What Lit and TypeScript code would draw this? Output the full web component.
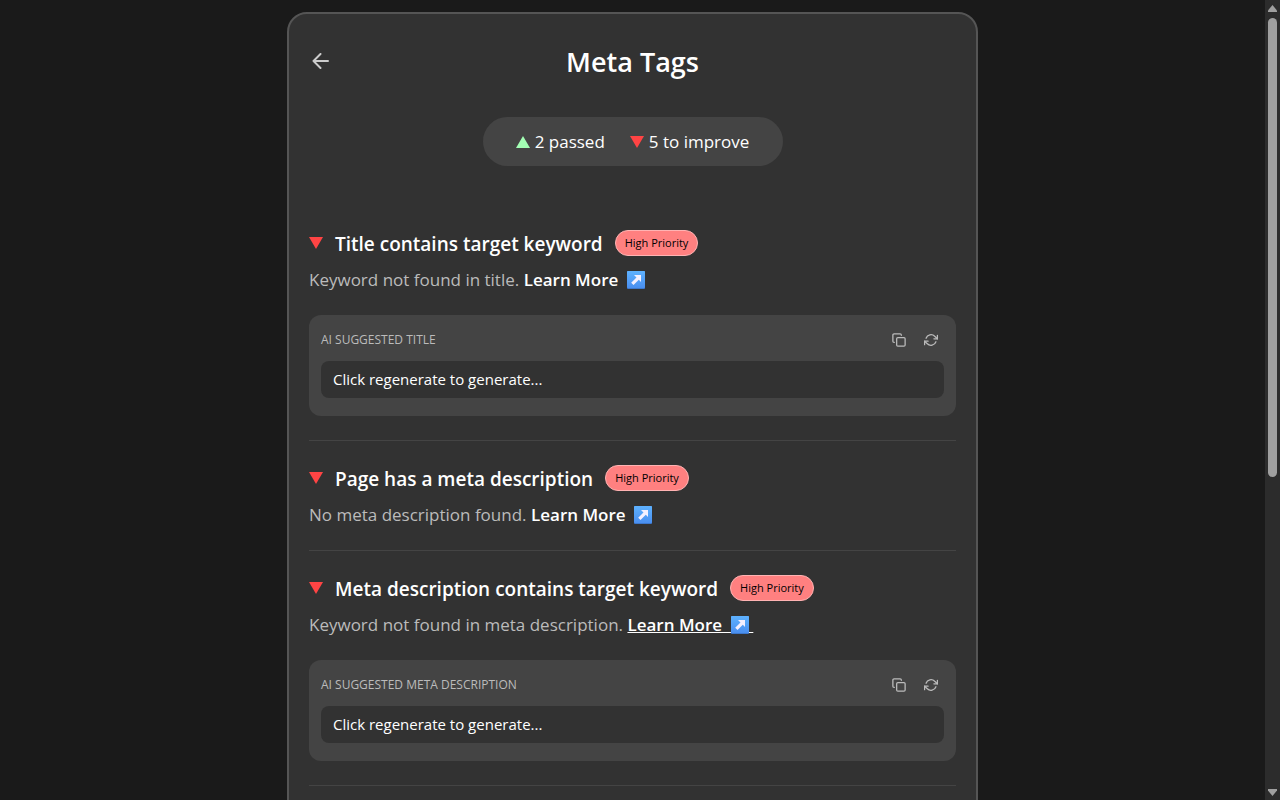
import { LitElement, html, css, nothing } from "lit";
import { customElement, property } from "lit/decorators.js";
import { classMap } from "lit/directives/class-map.js";

interface Check {
  title: string;
  detail: string;
  suggestion?: string;
  active?: boolean;
}

const CHECKS: Check[] = [
  {
    title: "Title contains target keyword",
    detail: "Keyword not found in title.",
    suggestion: "AI suggested title",
  },
  {
    title: "Page has a meta description",
    detail: "No meta description found.",
  },
  {
    title: "Meta description contains target keyword",
    detail: "Keyword not found in meta description.",
    suggestion: "AI suggested meta description",
    active: true,
  },
];

const downTriangle = html`<svg class="triangle" viewBox="0 0 14 12" width="14" height="12" aria-hidden="true">
  <path d="M0 0h14L7 12z" fill="#ff4444" />
</svg>`;

const upTriangle = html`<svg class="triangle" viewBox="0 0 14 12" width="14" height="12" aria-hidden="true">
  <path d="M0 12h14L7 0z" fill="#a3ffb4" />
</svg>`;

@customElement("suggestion-box")
export class SuggestionBox extends LitElement {
  @property() label = "";

  static styles = css`
    :host {
      display: block;
      margin: 23px 0 1px;
    }
    .box {
      background: #444;
      border-radius: 12px;
      padding: 12px 12px 18px;
    }
    .top {
      display: flex;
      align-items: center;
      justify-content: space-between;
      height: 26px;
      margin-bottom: 8px;
    }
    .label {
      font-size: 12px;
      line-height: 16px;
      color: #bbb;
      text-transform: uppercase;
    }
    .actions {
      display: flex;
      gap: 6px;
    }
    .action {
      display: flex;
      align-items: center;
      justify-content: center;
      width: 26px;
      height: 26px;
      padding: 0;
      border: 0;
      background: none;
      color: #bbb;
      cursor: pointer;
    }
    .value {
      background: #323232;
      border-radius: 8px;
      padding: 8px 12px;
      font-size: 15px;
      line-height: 21px;
      color: #fff;
    }
  `;

  render() {
    return html`
      <div class="box">
        <div class="top">
          <span class="label">${this.label}</span>
          <div class="actions">
            <button class="action" type="button" aria-label="Copy">
              <svg width="14" height="14" viewBox="0 0 24 24" fill="none" stroke="currentColor" stroke-width="2.2" stroke-linecap="round" stroke-linejoin="round">
                <rect x="8" y="8" width="14.500" height="14.500" rx="2" />
                <path d="M4 16H3.500a2 2 0 0 1-2-2V3.500a2 2 0 0 1 2-2H14a2 2 0 0 1 2 2V4" />
              </svg>
            </button>
            <button class="action" type="button" aria-label="Regenerate">
              <svg width="14" height="14" viewBox="0 0 24 24" fill="none" stroke="currentColor" stroke-width="2.2" stroke-linecap="round" stroke-linejoin="round">
                <path d="M23 4v6h-6M1 20v-6h6" />
                <path d="M3.510 9a9 9 0 0 1 14.850-3.360L23 10M1 14l4.640 4.360A9 9 0 0 0 20.490 15" />
              </svg>
            </button>
          </div>
        </div>
        <div class="value">Click regenerate to generate...</div>
      </div>
    `;
  }
}

@customElement("app-root")
export class AppRoot extends LitElement {
  static styles = css`
    :host {
      display: flex;
      height: 100vh;
      background: #1a1a1a;
      color: #fff;
      font-family: "Open Sans", "Noto Sans", sans-serif;
    }
    .page {
      flex: 1;
      min-width: 0;
      overflow-y: auto;
      scrollbar-width: none;
      padding: 12px;
      box-sizing: border-box;
    }
    .card {
      box-sizing: border-box;
      max-width: 691px;
      min-height: 160vh;
      margin: 0 auto;
      padding: 24px 20px;
      background: #323232;
      border: 2px solid #555;
      border-radius: 20px;
    }
    .header {
      display: grid;
      grid-template-columns: 24px 1fr 24px;
      align-items: center;
      height: 48px;
    }
    .back {
      display: flex;
      align-items: center;
      justify-content: center;
      width: 24px;
      height: 28px;
      padding: 0;
      border: 0;
      background: none;
      color: #ccc;
      cursor: pointer;
    }
    .heading {
      margin: 0;
      text-align: center;
      font-size: 27px;
      line-height: 36px;
      font-weight: 600;
    }
    .summary {
      display: flex;
      align-items: center;
      justify-content: center;
      gap: 25px;
      box-sizing: border-box;
      width: 300px;
      max-width: 100%;
      margin: 31px auto 40px;
      padding: 12px;
      border-radius: 25px;
      background: #444;
      font-size: 17px;
      line-height: 25px;
    }
    .count {
      display: flex;
      align-items: center;
      gap: 5px;
    }
    .triangle {
      flex: none;
      display: block;
    }
    .check {
      padding: 23px 0;
      border-bottom: 1px solid #444;
    }
    .row {
      display: flex;
      align-items: center;
      gap: 12px;
      margin-bottom: 10px;
    }
    .title {
      margin: 0;
      padding-top: 2px;
      font-size: 19px;
      line-height: 26px;
      font-weight: 600;
    }
    .badge {
      padding: 4px 9px;
      border: 1px solid #ffb3b3;
      border-radius: 13px;
      background: #ff8080;
      color: #000;
      font-size: 11px;
      line-height: 16px;
      white-space: nowrap;
    }
    .detail {
      margin: 0;
      font-size: 17px;
      line-height: 25px;
      color: #bbb;
    }
    .more {
      color: #fff;
      font-weight: 600;
      text-decoration: none;
      white-space: nowrap;
    }
    .more.active,
    .more:hover {
      text-decoration: underline;
    }
    .arrow {
      vertical-align: -3px;
    }
    .scrollbar {
      flex: none;
      display: flex;
      flex-direction: column;
      align-items: center;
      justify-content: space-between;
      box-sizing: border-box;
      width: 15px;
      padding: 5px 0 4px;
      background: #2c2c2c;
    }
    .track {
      flex: 1;
      margin: 6px 0;
    }
    .thumb {
      width: 9px;
      height: 60%;
      border-radius: 5px;
      background: #9f9f9f;
    }
  `;

  private renderCheck(check: Check) {
    return html`
      <section class="check">
        <div class="row">
          ${downTriangle}
          <h2 class="title">${check.title}</h2>
          <span class="badge">High Priority</span>
        </div>
        <p class="detail">
          ${check.detail}
          <a class=${classMap({ more: true, active: !!check.active })} href="#">Learn More&nbsp;&nbsp;<svg
              class="arrow" width="18" height="18" viewBox="0 0 18 18" aria-hidden="true">
              <defs>
                <linearGradient id="tile" x1="0" y1="0" x2="0" y2="1">
                  <stop offset="0" stop-color="#5eb2ff" />
                  <stop offset="1" stop-color="#4a8ff0" />
                </linearGradient>
              </defs>
              <rect width="18" height="18" rx="1" fill="#3d78cc" />
              <rect width="18" height="17" rx="1" fill="url(#tile)" />
              <path d="M7 4h7v7l-2.200-2.200-5.300 5.200-2.300-2.300 5.300-5.200z" fill="#f4f0ff" />
            </svg>&nbsp;</a>
        </p>
        ${check.suggestion
          ? html`<suggestion-box .label=${check.suggestion}></suggestion-box>`
          : nothing}
      </section>
    `;
  }

  render() {
    return html`
      <main class="page">
        <div class="card">
          <header class="header">
            <button class="back" type="button" aria-label="Back">
              <svg width="18" height="18" viewBox="0 0 18 18" fill="none" stroke="currentColor" stroke-width="2" stroke-linecap="round" stroke-linejoin="round">
                <path d="M16 8H1.500M8.500 1L1.500 8l7 7" />
              </svg>
            </button>
            <h1 class="heading">Meta Tags</h1>
          </header>
          <div class="summary">
            <span class="count">${upTriangle}2 passed</span>
            <span class="count">${downTriangle}5 to improve</span>
          </div>
          ${CHECKS.map((check) => this.renderCheck(check))}
        </div>
      </main>
      <div class="scrollbar" aria-hidden="true">
        <svg width="9" height="7" viewBox="0 0 9 7"><path d="M4.500 0L9 5.500V7H0V5.500z" fill="#9f9f9f" /></svg>
        <div class="track"><div class="thumb"></div></div>
        <svg width="9" height="7" viewBox="0 0 9 7"><path d="M4.500 7L9 1.500V0H0V1.500z" fill="#9f9f9f" /></svg>
      </div>
    `;
  }
}
